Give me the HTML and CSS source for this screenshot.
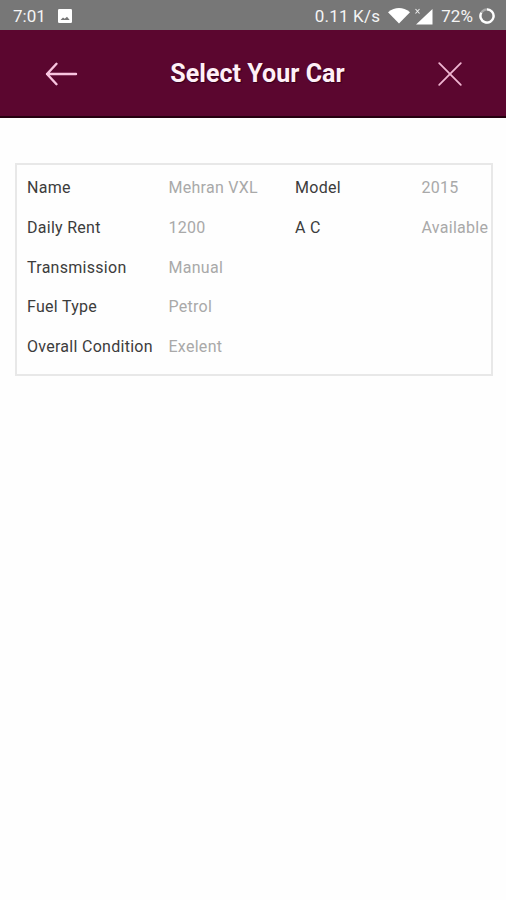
FILE: index.html
```html
<!DOCTYPE html>
<html lang="en">
<head>
<meta charset="utf-8">
<title>Select Your Car</title>
<link rel="stylesheet" href="styles.css">
</head>
<body>
<div class="status">
  <span class="time">7:01</span>
  <svg class="photo" width="14" height="14" viewBox="0 0 14 14"><rect width="14" height="14" rx="1.2" fill="#fff"/><path d="M2.5 11 5 8.4l1.7 1.4L9 7.8l2.7 3.2z" fill="#777"/></svg>
  <span class="speed">0.11 K/s</span>
  <svg class="wifi" width="22" height="16" viewBox="0 0 22 16"><path d="M0 4.200Q11-4 22 4.200L11 15.500z" fill="#fff"/></svg>
  <svg class="signal" width="18" height="17" viewBox="0 0 18 17"><path d="M17.500 1v15.500H1z" fill="#fff"/><path d="m.5 1 4 4.500M4.500 1l-4 4.500" stroke="#eee" stroke-width="1.100"/></svg>
  <span class="percent">72%</span>
  <svg class="battery" width="16" height="16" viewBox="0 0 16 16" fill="none" stroke-width="2.300"><circle cx="8" cy="8" r="6.600" stroke="#aaa"/><path d="M8 1.400A6.600 6.600 0 1 1 2.300 4.700" stroke="#fff"/></svg>
</div>
<header class="header">
  <svg class="back" width="34" height="26" viewBox="0 0 34 26" fill="none" stroke="#f9c4df" stroke-width="2.400" stroke-linecap="round" stroke-linejoin="round"><path d="M32 13H3M12.500 2.800 3 13l9.500 10.200"/></svg>
  <h1 class="title">Select Your Car</h1>
  <svg class="close" width="26" height="26" viewBox="0 0 26 26" stroke="#efb5d1" stroke-width="1.800" stroke-linecap="round"><path d="m2.200 2.200 21.600 21.600M23.800 2.200 2.200 23.800"/></svg>
</header>
<main class="card">
  <div class="row"><span>Name</span><span class="value">Mehran VXL</span><span>Model</span><span class="value">2015</span></div>
  <div class="row"><span>Daily Rent</span><span class="value">1200</span><span>A C</span><span class="value">Available</span></div>
  <div class="row"><span>Transmission</span><span class="value">Manual</span></div>
  <div class="row"><span>Fuel Type</span><span class="value">Petrol</span></div>
  <div class="row"><span>Overall Condition</span><span class="value">Exelent</span></div>
</main>
</body>
</html>
```
FILE: styles.css
```css
* { box-sizing: border-box; }
body { margin: 0; min-height: 900px; background: #fefefe; font-family: Roboto, sans-serif; }
svg { display: block; flex: none; }
.status { display: flex; align-items: center; height: 30px; padding: 2px 11px 0 13px; background: #777; color: #f4f4f4; font-size: 17px; white-space: nowrap; }
.photo { margin-left: 12px; }
.speed { margin-left: auto; letter-spacing: 0.2px; }
.wifi { margin-left: 8px; }
.signal { margin-left: 5px; }
.percent { margin-left: 8px; letter-spacing: 0.1px; }
.battery { margin-left: 6px; }
.header { display: flex; align-items: center; justify-content: space-between; height: 88px; padding: 2px 43px 0 44px; background: #5b062f; border-bottom: 2px solid #25000f; }
.title { margin: 0; color: #fff0f7; font-size: 25px; font-weight: 700; line-height: 30px; letter-spacing: 0.05px; white-space: nowrap; text-shadow: 1px 1px 1px #35001b; }
.card { width: 478px; height: 213px; margin: 45px 0 0 15px; padding: 2.6px 0 0 10px; border: 2px solid #e8e8e8; }
.row { display: grid; grid-template-columns: 141px 127px 126px 70px; align-items: center; height: 39.8px; color: #3c3c3c; font-size: 16px; letter-spacing: 0.28px; white-space: nowrap; }
.value { padding-left: 0.5px; color: #a9a9a9; }
```
